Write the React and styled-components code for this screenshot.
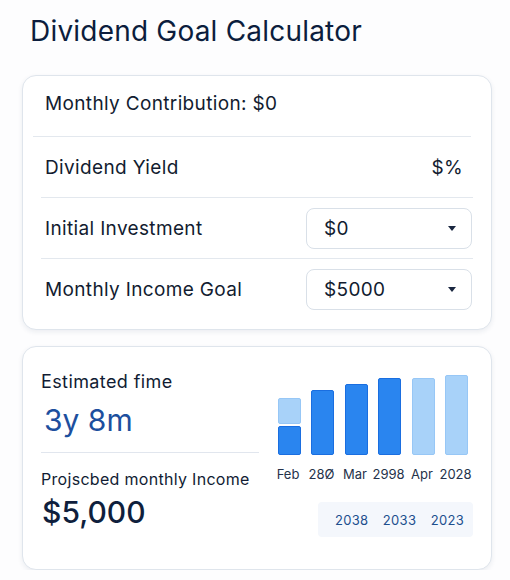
import styled, { createGlobalStyle } from "styled-components";

const GlobalStyle = createGlobalStyle`
  * { box-sizing: border-box; }
  body {
    margin: 0;
    background: #fdfdfe;
    font-family: Inter, "Noto Sans", sans-serif;
    color: #111c33;
  }
`;

const Page = styled.div`
  width: 510px;
  padding: 13px 18px 0 22px;
`;

const Title = styled.h1`
  margin: 0 0 26px 8px;
  font-size: 28px;
  line-height: 36px;
  font-weight: 400;
  color: #0c1d3d;
  letter-spacing: 0.2px;
`;

const Card = styled.section`
  width: 470px;
  background: #ffffff;
  border: 1px solid #dfe5ec;
  border-radius: 14px;
  box-shadow: 0 2px 5px rgba(30, 50, 90, 0.08);
`;

const FormCard = styled(Card)`
  padding: 0 18px 9px 18px;
`;

const Row = styled.div`
  display: flex;
  align-items: center;
  justify-content: space-between;
  height: 61px;
  margin: ${(p) => (p.$first ? "0 2px 0 -8px" : "0")};
  padding: ${(p) => (p.$first ? "0 0 6px 12px" : "0 0 0 4px")};
  border-bottom: ${(p) => (p.$last ? "none" : "1px solid #e3e8ee")};
`;

const Label = styled.span`
  font-size: 19px;
  letter-spacing: 0.35px;
  color: #121c30;
`;

const Suffix = styled.span`
  font-size: 19px;
  letter-spacing: 0.35px;
  color: #121c30;
  margin-right: 10px;
`;

const Select = styled.div`
  display: flex;
  align-items: center;
  justify-content: space-between;
  width: 166px;
  height: 41px;
  margin-right: 1px;
  padding: 0 15px 0 17px;
  border: 1px solid #d9e0e8;
  border-radius: 8px;
  font-size: 19px;
  letter-spacing: 0.35px;
  color: #121c30;
`;

const Caret = styled.span`
  width: 0;
  height: 0;
  border-left: 4.5px solid transparent;
  border-right: 4.5px solid transparent;
  border-top: 5px solid #1a2740;
`;

const ResultCard = styled(Card)`
  margin-top: 16px;
  height: 224px;
  padding: 24px 18px 0 18px;
  display: flex;
  justify-content: space-between;
`;

const Summary = styled.div`
  width: 218px;
`;

const Metric = styled.div`
  padding-bottom: ${(p) => (p.$top ? "14px" : "0")};
  border-bottom: ${(p) => (p.$top ? "1px solid #e1e6ee" : "none")};
  margin-top: ${(p) => (p.$top ? "0" : "15px")};
`;

const MetricLabel = styled.div`
  font-size: ${(p) => p.$size}px;
  letter-spacing: ${(p) => p.$spacing}px;
  line-height: 22px;
  color: #111c33;
`;

const MetricValue = styled.div`
  margin-top: ${(p) => p.$gap}px;
  font-size: ${(p) => p.$size}px;
  line-height: 36px;
  font-weight: ${(p) => p.$weight};
  color: ${(p) => p.$color};
  padding-left: ${(p) => p.$indent}px;
`;

const ChartArea = styled.div`
  display: flex;
  flex-direction: column;
  align-items: flex-end;
  padding-right: 5px;
`;

const Bars = styled.div`
  display: flex;
  gap: 10.5px;
  height: 84px;
  align-items: flex-end;
`;

const Column = styled.div`
  width: 23px;
  display: flex;
  flex-direction: column;
  align-items: center;
`;

const BarStack = styled.div`
  width: 23px;
  height: ${(p) => p.$h}px;
  display: flex;
  flex-direction: column;
  gap: 2px;
`;

const Bar = styled.div`
  flex: ${(p) => p.$flex};
  border-radius: 2px;
  background: ${(p) => (p.$light ? "#a8d2f9" : "#2a85ef")};
  border: 1px solid ${(p) => (p.$light ? "#97c7f6" : "#1a6ee0")};
`;

const Labels = styled.div`
  display: flex;
  gap: 10.5px;
  margin-top: 10px;
  margin-right: 1px;
`;

const TickLabel = styled.span`
  white-space: nowrap;
  font-size: 13px;
  line-height: 18px;
  color: #25324a;
`;

const YearBox = styled.div`
  margin-top: 19px;
  margin-right: -5px;
  width: 155px;
  height: 35px;
  display: flex;
  align-items: center;
  justify-content: space-between;
  padding: 0 9px 0 17px;
  background: #f4f7fc;
  border-radius: 4px;
`;

const Year = styled.span`
  font-size: 13px;
  color: #1d4f8e;
  letter-spacing: 0.3px;
`;

const rows = [
  { label: "Monthly Contribution: $0" },
  { label: "Dividend Yield", suffix: "$%" },
  { label: "Initial Investment", select: "$0" },
  { label: "Monthly Income Goal", select: "$5000" },
];

const bars = [
  { h: 57, parts: [{ light: true, flex: 26 }, { flex: 29 }] },
  { h: 65, parts: [{ flex: 1 }] },
  { h: 71, parts: [{ flex: 1 }] },
  { h: 77, parts: [{ flex: 1 }] },
  { h: 77, parts: [{ light: true, flex: 1 }] },
  { h: 80, parts: [{ light: true, flex: 1 }] },
];

const ticks = ["Feb", "28Ø", "Mar", "2998", "Apr", "2028"];

export default function App() {
  return (
    <>
      <GlobalStyle />
      <Page>
        <Title>Dividend Goal Calculator</Title>
        <FormCard>
          {rows.map((r, i) => (
            <Row key={r.label} $first={i === 0} $last={i === rows.length - 1}>
              <Label>{r.label}</Label>
              {r.suffix && <Suffix>{r.suffix}</Suffix>}
              {r.select && (
                <Select>
                  <span>{r.select}</span>
                  <Caret />
                </Select>
              )}
            </Row>
          ))}
        </FormCard>
        <ResultCard>
          <Summary>
            <Metric $top>
              <MetricLabel $size={18} $spacing={0.4}>Estimated fime</MetricLabel>
              <MetricValue $gap={9} $size={30} $weight={400} $color="#1d4f9e" $indent={3}>
                3y 8m
              </MetricValue>
            </Metric>
            <Metric>
              <MetricLabel $size={16} $spacing={0.3}>Projscbed monthly Income</MetricLabel>
              <MetricValue $gap={4} $size={30} $weight={500} $color="#0f1f3d" $indent={1}>
                $5,000
              </MetricValue>
            </Metric>
          </Summary>
          <ChartArea>
            <Bars>
              {bars.map((b, i) => (
                <BarStack key={i} $h={b.h}>
                  {b.parts.map((p, j) => (
                    <Bar key={j} $light={p.light} $flex={p.flex} />
                  ))}
                </BarStack>
              ))}
            </Bars>
            <Labels>
              {ticks.map((t) => (
                <Column key={t}>
                  <TickLabel>{t}</TickLabel>
                </Column>
              ))}
            </Labels>
            <YearBox>
              <Year>2038</Year>
              <Year>2033</Year>
              <Year>2023</Year>
            </YearBox>
          </ChartArea>
        </ResultCard>
      </Page>
    </>
  );
}
